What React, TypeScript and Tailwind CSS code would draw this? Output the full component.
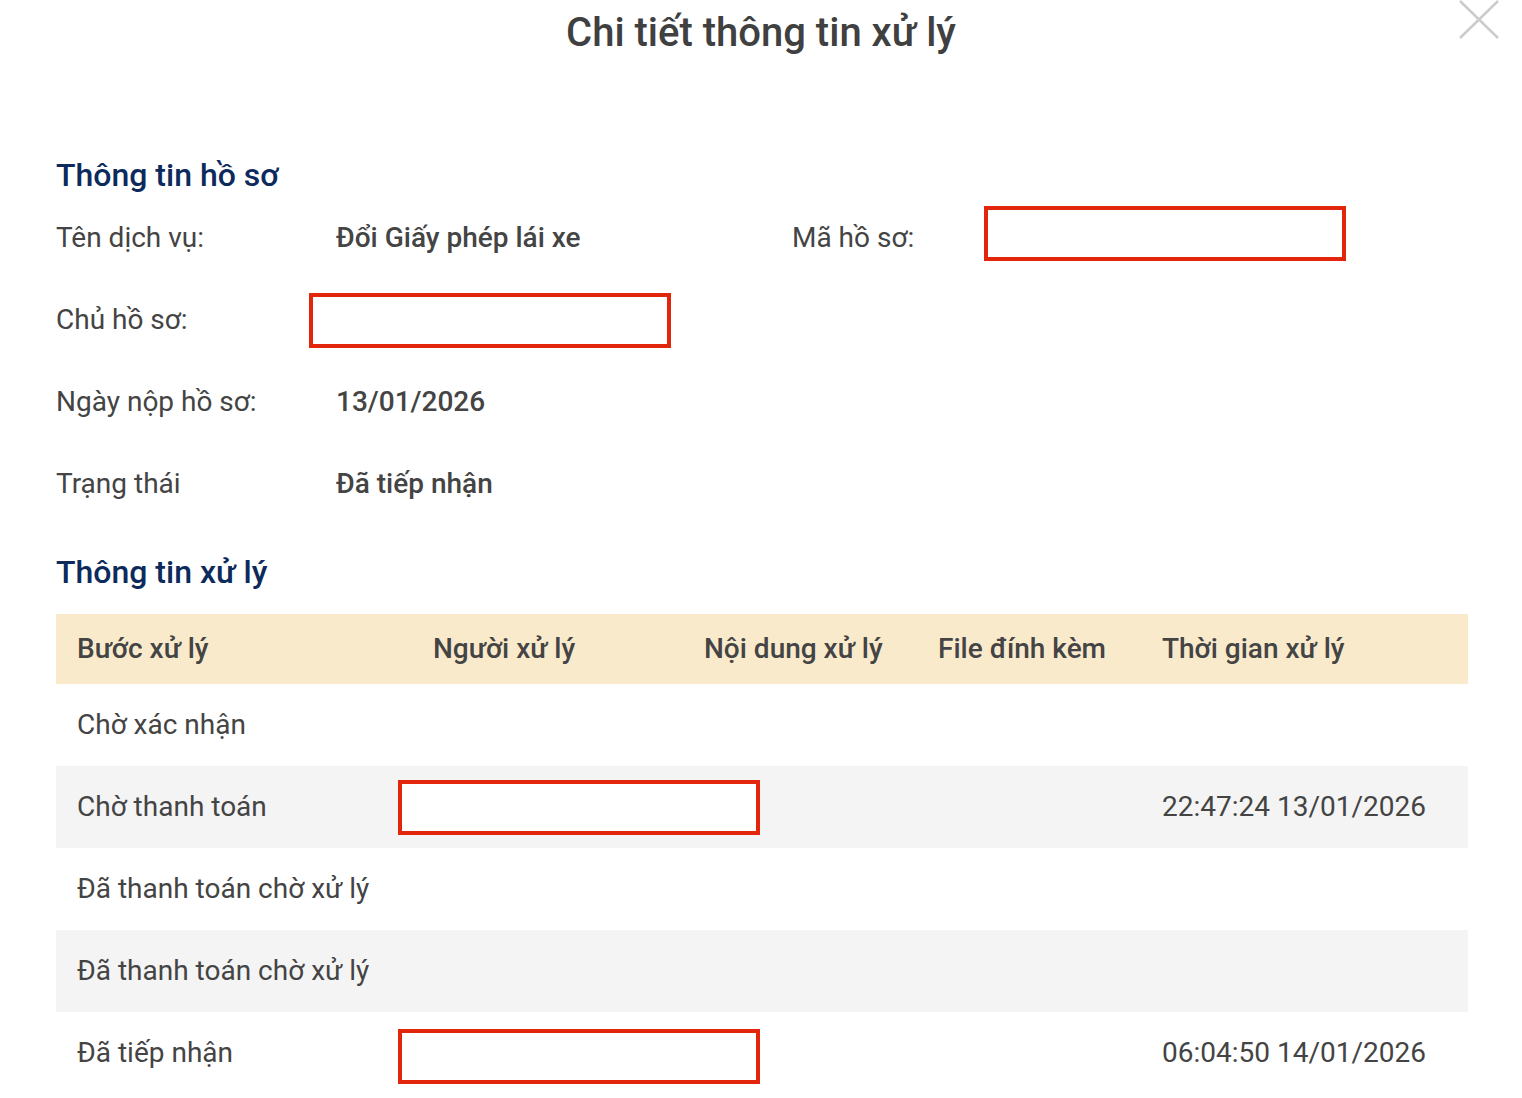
import React from "react";

type Step = {
  step: string;
  handler?: boolean;
  time?: string;
};

const steps: Step[] = [
  { step: "Chờ xác nhận" },
  { step: "Chờ thanh toán", handler: true, time: "22:47:24 13/01/2026" },
  { step: "Đã thanh toán chờ xử lý" },
  { step: "Đã thanh toán chờ xử lý" },
  { step: "Đã tiếp nhận", handler: true, time: "06:04:50 14/01/2026" },
];

// red annotation box used to hide personal data
function Redacted({ className = "" }: { className?: string }) {
  return (
    <div
      className={`h-[55px] w-[362px] shrink-0 border-[4px] border-[#e2260c] bg-white ${className}`}
    />
  );
}

function InfoRow({ label, children }: { label: string; children: React.ReactNode }) {
  return (
    <div className="flex h-[82px] items-center">
      <div className="w-[280px] shrink-0">{label}</div>
      {children}
    </div>
  );
}

export default function App() {
  return (
    <div
      className="relative min-h-[1098px] w-full bg-white text-[28px] text-[#444444]"
      style={{ fontFamily: "Roboto, 'Liberation Sans', sans-serif" }}
    >
      <button className="absolute right-[22px] top-0 h-[40px] w-[42px]" aria-label="Đóng">
        <svg viewBox="0 0 42 40" className="h-full w-full" fill="none">
          <path d="M2 1 L40 38 M40 1 L2 38" stroke="#cccccc" strokeWidth="2.5" />
        </svg>
      </button>

      <div className="flex h-[66px] items-center justify-center">
        <h1 className="text-[40px] font-medium text-[#404040]">Chi tiết thông tin xử lý</h1>
      </div>

      <div className="pl-[56px] pr-[54px]">
        <div className="mt-[86px] flex h-[45px] items-center">
          <h2 className="text-[32px] font-medium text-[#0d2a5c]">Thông tin hồ sơ</h2>
        </div>

        <InfoRow label="Tên dịch vụ:">
          <div className="w-[456px] shrink-0 font-medium">Đổi Giấy phép lái xe</div>
          <div className="w-[192px] shrink-0">Mã hồ sơ:</div>
          <Redacted className="-mt-[10px]" />
        </InfoRow>
        <InfoRow label="Chủ hồ sơ:">
          <Redacted className="-ml-[27px]" />
        </InfoRow>
        <InfoRow label="Ngày nộp hồ sơ:">
          <div className="font-medium">13/01/2026</div>
        </InfoRow>
        <InfoRow label="Trạng thái">
          <div className="font-medium">Đã tiếp nhận</div>
        </InfoRow>

        <div className="flex h-[89px] items-center pt-[4px]">
          <h2 className="text-[32px] font-medium text-[#0d2a5c]">Thông tin xử lý</h2>
        </div>

        <div className="w-full">
          <div className="grid h-[70px] grid-cols-[357px_271px_234px_224px_1fr] items-center bg-[#faeacc] font-medium">
            <div className="pl-[21px]">Bước xử lý</div>
            <div className="pl-[20px]">Người xử lý</div>
            <div className="pl-[20px]">Nội dung xử lý</div>
            <div className="pl-[20px]">File đính kèm</div>
            <div className="pl-[20px]">Thời gian xử lý</div>
          </div>
          {steps.map((s, i) => (
            <div
              key={i}
              className={`grid h-[82px] grid-cols-[357px_271px_234px_224px_1fr] items-center ${
                i % 2 === 1 ? "bg-[#f4f4f4]" : "bg-white"
              }`}
            >
              <div className="pl-[21px] whitespace-nowrap">{s.step}</div>
              <div className="relative h-full">
                {s.handler && (
                  <Redacted
                    className={`absolute left-[-15px] ${i === 4 ? "top-[17px]" : "top-[14px]"}`}
                  />
                )}
              </div>
              <div />
              <div />
              <div className="pl-[20px]">{s.time}</div>
            </div>
          ))}
        </div>
      </div>
    </div>
  );
}
